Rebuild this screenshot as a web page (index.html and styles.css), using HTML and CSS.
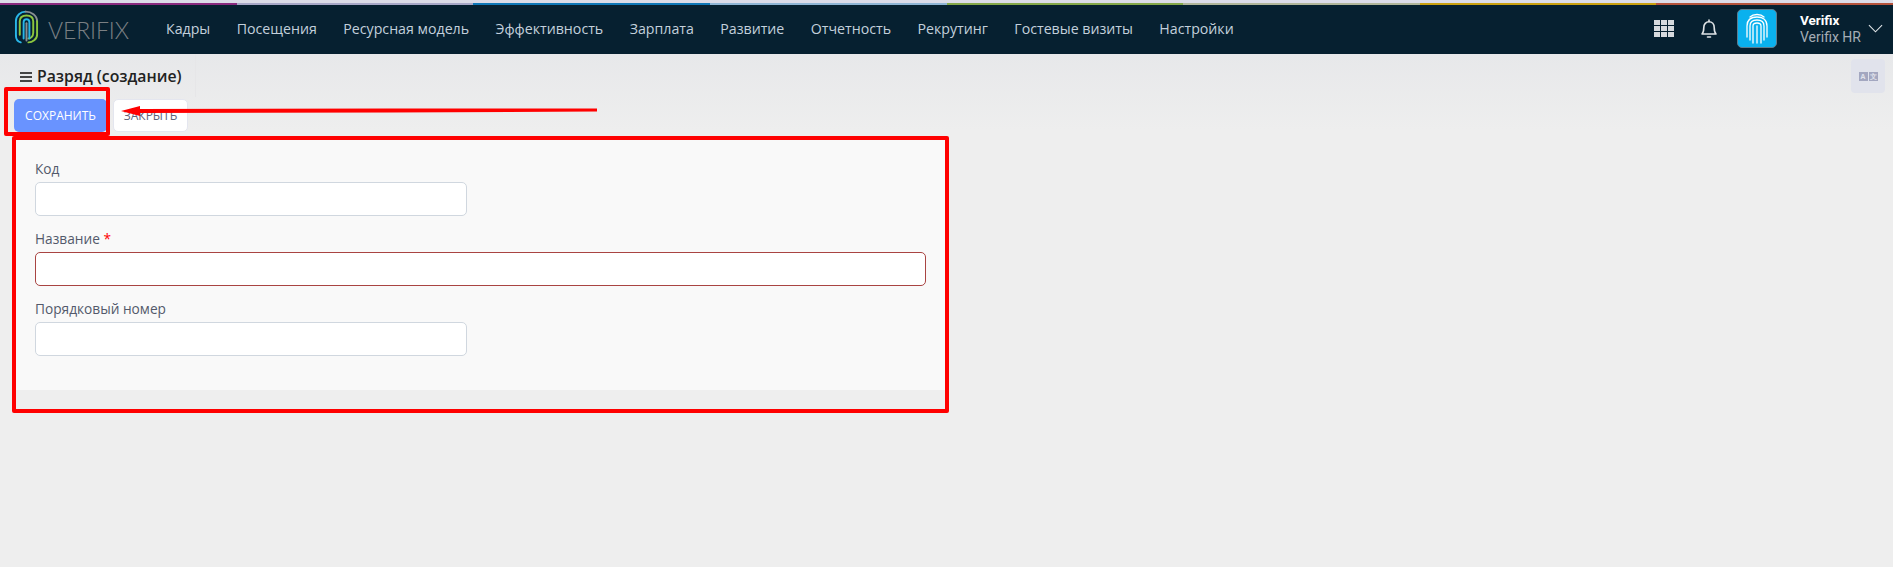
FILE: index.html
```html
<!DOCTYPE html>
<html lang="ru">
<head>
<meta charset="utf-8">
<title>Разряд (создание)</title>
<link rel="stylesheet" href="styles.css">
</head>
<body>
<div class="stripe"><i class="s1"></i><i class="s2"></i><i class="s3"></i><i class="s4"></i><i class="s5"></i><i class="s6"></i><i class="s7"></i><i class="s8"></i></div>
<header class="topbar">
  <div class="brand">
    <svg class="brand-mark" viewBox="0 0 26 36" fill="none" stroke-linecap="round" stroke-width="2">
      <path d="M2 27V12C2 6 7 2 12 2" stroke="#29b6e8"/>
      <path d="M12 2C18 2 24 6 24 12" stroke="#8a8f93"/>
      <path d="M24 12V26C24 31 19 34 15 34" stroke="#8cc63f"/>
      <path d="M2 27C2 30 4 33 7 34" stroke="#29b6e8"/>
      <path d="M6 26V12C6 8 9 6 13 6C17 6 20 8 20 12V24C20 28 17 30 15 30" stroke="#8cc63f"/>
      <path d="M10 30V13C10 11 11 10 13 10C15 10 16 11 16 13V30" stroke="#29b6e8"/>
      <path d="M13 14V32" stroke="#8a8f93"/>
    </svg>
    <span class="brand-name">VERIFIX</span>
  </div>
  <nav class="menu">
    <a>Кадры</a><a>Посещения</a><a>Ресурсная модель</a><a>Эффективность</a><a>Зарплата</a><a>Развитие</a><a>Отчетность</a><a>Рекрутинг</a><a>Гостевые визиты</a><a>Настройки</a>
  </nav>
  <div class="tools">
    <div class="apps"><i></i><i></i><i></i><i></i><i></i><i></i><i></i><i></i><i></i></div>
    <svg class="bell" viewBox="0 0 18 20" fill="none" stroke="#dfe3e6" stroke-width="1.6" stroke-linejoin="round" stroke-linecap="round">
      <path d="M2 15C3.5 13.5 3.8 12 3.8 8.5C3.8 5 6 2.8 9 2.8C12 2.8 14.2 5 14.2 8.5C14.2 12 14.5 13.5 16 15Z"/>
      <path d="M9 1V2.5M7.5 18H10.5"/>
    </svg>
    <div class="avatar">
      <svg viewBox="0 0 24 32" fill="none" stroke="#fff" stroke-width="1.3" stroke-linecap="round">
        <path d="M5 4C7 2 9 1.5 12 1.5C15 1.5 17 2 19 4"/>
        <path d="M2 24V13C2 7 6 4 12 4C18 4 22 7 22 13V24"/>
        <path d="M5 27V13C5 9 8 7 12 7C16 7 19 9 19 13V27"/>
        <path d="M8 30V13C8 11 10 10 12 10C14 10 16 11 16 13V30"/>
        <path d="M12 13V30"/>
      </svg>
    </div>
    <div class="user">
      <strong>Verifix</strong>
      <span>Verifix HR</span>
    </div>
    <svg class="caret" viewBox="0 0 16 9" fill="none" stroke="#dfe3e6" stroke-width="1.2"><path d="M1 1L8 8L15 1"/></svg>
  </div>
</header>
<main class="page">
  <div class="title-row">
    <h1 class="title"><span class="burger"><i></i><i></i><i></i></span>Разряд (создание)</h1>
    <div class="lang"><b>A</b><b>文</b></div>
  </div>
  <div class="actions">
    <button class="btn btn-save">СОХРАНИТЬ</button>
    <button class="btn btn-close">ЗАКРЫТЬ</button>
  </div>
  <section class="panel">
    <div class="form">
      <div class="field short">
        <label>Код</label>
        <input class="input" type="text">
      </div>
      <div class="field">
        <label>Название <em>*</em></label>
        <input class="input invalid" type="text">
      </div>
      <div class="field short">
        <label>Порядковый номер</label>
        <input class="input" type="text">
      </div>
    </div>
  </section>
</main>
<div class="mark mark-btn"></div>
<div class="mark mark-form"></div>
<svg class="arrow" viewBox="0 0 478 12" fill="none">
  <path d="M1 6L20 1V4L270 3.6L477 3.6V6.5L270 7.5L20 8V11Z" fill="#f00"/>
</svg>
</body>
</html>
```
FILE: styles.css
```css
* { box-sizing: border-box; }
html, body { height: 100%; }
body {
  margin: 0;
  height: 567px;
  overflow: hidden;
  background: linear-gradient(#e7e8ea 54px, #eeeeee 130px);
  font-family: "Open Sans", "Noto Sans", sans-serif;
  color: #3f4254;
  position: relative;
}
.stripe { display: flex; height: 5px; background: #dcdce8; padding-top: 3px; }
.stripe i { display: block; height: 2px; flex: 1; }
.s1 { background: #8a2a7f; }
.s2 { background: #a8a8c8; }
.s3 { background: #0f78b8; }
.s4 { background: #8fb5d5; }
.s5 { background: #84a84a; }
.s6 { background: #b0b59a; }
.s7 { background: #c9a010; }
.s8 { background: #b5533c; }

.topbar {
  height: 49px;
  background: #062030;
  display: flex;
  align-items: center;
  padding-left: 14px;
}
.brand { display: flex; align-items: center; width: 152px; margin-top: -5px; }
.brand-mark { width: 25px; height: 36px; }
.brand-name { margin: 5px 0 0 9px; font-family: "Lato", sans-serif; font-weight: 300; font-size: 23px; color: #7a7f83; letter-spacing: -.1px; }
.menu { display: flex; gap: 26.4px; margin-top: -3px; }
.menu a { font-size: 14.2px; color: #c3d0dc; white-space: nowrap; }
.tools { margin-left: auto; display: flex; align-items: center; padding-right: 10px; margin-top: -2px; }
.apps { display: grid; grid-template-columns: repeat(3, 6px); grid-auto-rows: 5px; gap: 1px; margin-right: 26px; }
.apps i { display: block; background: #d6dade; }
.bell { width: 18px; height: 20px; margin-right: 19px; }
.avatar {
  width: 40px; height: 39px;
  background: #0ab1ee;
  border: 1px solid #5d7d8f;
  border-radius: 5px;
  display: flex; align-items: center; justify-content: center;
}
.avatar svg { width: 24px; height: 32px; }
.user { margin-left: 23px; width: 67px; display: flex; flex-direction: column; font-family: "Roboto", sans-serif; line-height: 17px; }
.user strong { color: #fff; font-weight: 700; font-size: 13.5px; }
.user span { color: #a4adb5; font-size: 14px; }
.caret { width: 15px; height: 9px; margin-left: 1px; }

.page { padding: 0 14px; position: relative; }
.title-row { display: flex; height: 45px; align-items: center; }
.title {
  margin: -2px 0 0 6px;
  padding-right: 13px;
  height: 43px;
  display: flex; align-items: center;
  font-size: 15.8px; font-weight: 600; color: #222;
  border-right: 1px solid #e6e6e8;
}
.burger { display: flex; flex-direction: column; gap: 2px; margin-right: 5px; margin-top: 2px; }
.burger i { display: block; width: 12px; height: 2px; background: #444; }
.lang {
  position: absolute; right: 8px; top: 5px;
  width: 34px; height: 34px;
  background: #e1e3ec; border-radius: 4px;
  display: flex; align-items: center; justify-content: center; gap: 1px;
}
.lang b { width: 9px; height: 9px; background: #a3a7c0; color: #e1e3ec; font-size: 7px; line-height: 9px; text-align: center; font-weight: 700; }
.actions { display: flex; gap: 6px; }
.btn {
  height: 33px;
  border-radius: 5px;
  font-family: inherit;
  font-size: 12px;
  padding: 0;
}
.btn-save { width: 93px; background: #6993ff; border: 0; color: #fff; }
.btn-close { width: 75px; background: #fff; border: 1px solid #e4e6ef; color: #5e6278; }
.panel {
  width: 932px;
  margin-top: 7px;
  background: #f9f9f9;
  height: 251px;
  padding: 20px 20px 0 21px;
}
.form { display: flex; flex-direction: column; gap: 13px; }
.field label { display: block; font-size: 13.7px; line-height: 19px; color: #53596b; margin-bottom: 4px; }
.field em { color: #f00; font-style: normal; }
.input { display: block; width: 100%; height: 34px; background: #fff; border: 1px solid #d0d7df; border-radius: 5px; padding: 0 10px; }
.short .input { width: 432px; }
.invalid { border-color: #a94442; }

.mark { position: absolute; border: 4px solid #f00; border-radius: 2px; }
.mark-btn { left: 4px; top: 87px; width: 106px; height: 49px; }
.mark-form { left: 12px; top: 136px; width: 937px; height: 277px; }
.arrow { position: absolute; left: 120px; top: 105px; width: 478px; height: 12px; }
```
